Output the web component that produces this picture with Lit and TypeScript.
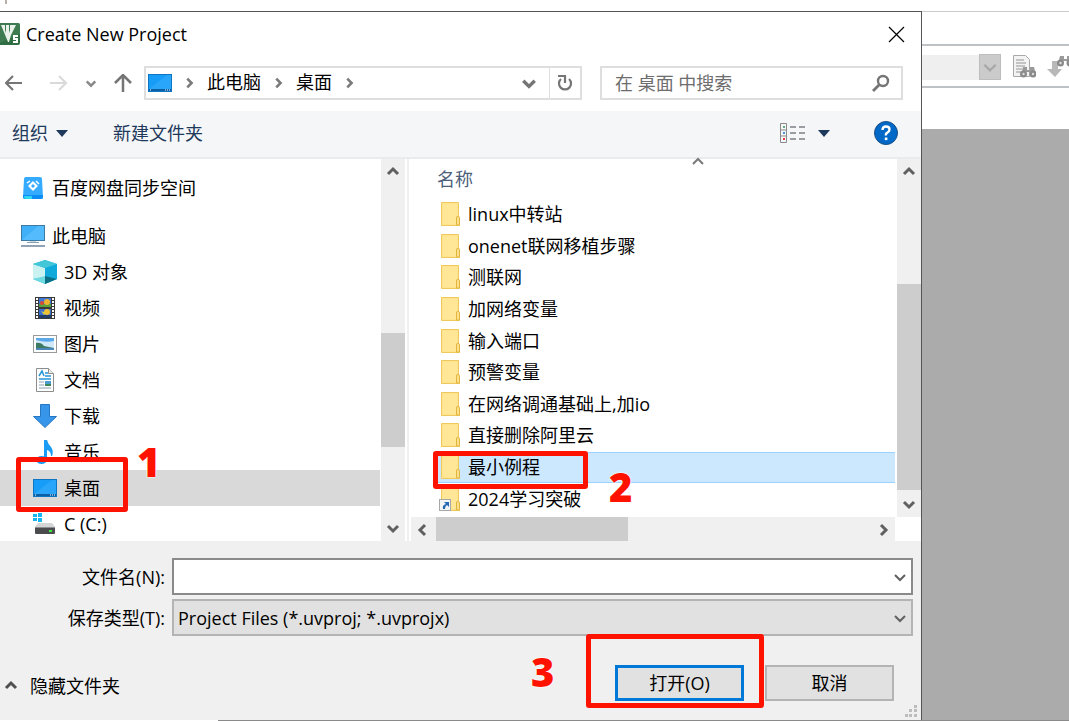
import { LitElement, html, css, svg, nothing, TemplateResult } from "lit";
import { customElement, property } from "lit/decorators.js";
import { classMap } from "lit/directives/class-map.js";
import { styleMap } from "lit/directives/style-map.js";

type Direction = "up" | "down" | "left" | "right";

const chevronPaths: Record<Direction, string> = {
  up: "M2 9 L7 4 L12 9",
  down: "M2 5 L7 10 L12 5",
  left: "M9 2 L4 7 L9 12",
  right: "M5 2 L10 7 L5 12",
};

const chevron = (dir: Direction, size = 14, stroke = 2, color = "#606060") => html`
  <svg width=${size} height=${size} viewBox="0 0 14 14" fill="none" stroke=${color} stroke-width=${stroke}>
    <path d=${chevronPaths[dir]} />
  </svg>`;

const glyphs: Record<string, TemplateResult> = {
  baidu: svg`
    <path d="M5 1h14q2 0 2 2l1 18q0 2-2 2H4q-2 0-2-2L3 3q0-2 2-2z" fill="#35abff"/>
    <path d="M2 19h20v2q0 2-2 2H4q-2 0-2-2z" fill="#0b8df5"/>
    <path d="M3 20h8v3H4q-1-1-1-3z" fill="#2fd6f2"/>
    <path d="M12 5l5 5-5 5-5-5z" fill="#fff"/>
    <path d="M12 8l2 2-2 2-2-2z" fill="#35abff"/>
    <path d="M6 7l3-2M15 5l3 3" stroke="#fff" stroke-width="1.500"/>`,
  pc: svg`
    <rect x="0.500" y="1.500" width="23" height="15" fill="#3fb0f7" stroke="#3c7ba6"/>
    <path d="M1 16L17 2h6v14z" fill="#62c3ff" opacity=".6"/>
    <path d="M9 17h6l1 2H8z" fill="#c8d2dc"/>
    <rect x="6" y="18" width="12" height="1" fill="#8aa0b4"/>
    <rect x="0" y="21" width="24" height="2" fill="#93a2b5"/>`,
  cube: svg`
    <path d="M0 4l12-4 12 4v15l-12 5L0 19z" fill="#19b5e2"/>
    <path d="M0 4l12 4v9L0 19z" fill="#c9f2f1"/>
    <path d="M12 8l12-4v15l-12-3z" fill="#0fa9dc"/>
    <path d="M0 4l12-4 12 4-12 4z" fill="#43c6d8"/>
    <path d="M0 19l12-3v8z" fill="#6fdbe0"/>
    <path d="M12 16l12 3-12 5z" fill="#0b6f86"/>`,
  video: svg`
    <rect x="2" y="1" width="20" height="22" fill="#3a3a3a"/>
    <path d="M4 2v20M20 2v20" stroke="#fff" stroke-width="2" stroke-dasharray="2 1"/>
    <rect x="6" y="2" width="12" height="9" fill="#3f78d8"/>
    <rect x="6" y="13" width="12" height="9" fill="#3a6fd0"/>
    <path d="M6 8h12v3H6z" fill="#58a13c"/><path d="M6 19h12v3H6z" fill="#223d66"/>
    <circle cx="14" cy="6" r="3" fill="#f2b32c"/><circle cx="9" cy="7" r="2" fill="#d94a35"/>
    <circle cx="14" cy="16" r="3" fill="#f0c02e"/><path d="M13 17l-5-2 3 4z" fill="#d9d04a"/>`,
  image: svg`
    <rect x="0.500" y="3.500" width="23" height="17" fill="#fff" stroke="#9a9a9a"/>
    <rect x="3" y="6" width="18" height="12" fill="#cfe8fa"/>
    <path d="M3 6h18v3q-9 2-18-1z" fill="#5aa8ea"/>
    <path d="M3 11q5-1 8 3l10 2v1H3z" fill="#3e7a62"/>
    <path d="M3 16h18v2H3z" fill="#4b86b8"/>`,
  doc: svg`
    <path d="M3.500 0.500h12l5 5v18h-17z" fill="#fff" stroke="#8d8d8d"/>
    <path d="M15.500 0.500v5h5" fill="#eee" stroke="#8d8d8d"/>
    <path d="M6 8l3-5 2 5M12 5h3M12 8h6M6 11h12" stroke="#2795d6" stroke-width="1.500" fill="none"/>
    <path d="M6 14h5M6 17h5M6 20h12" stroke="#8aa0b4" stroke-width="1.200"/>
    <rect x="12" y="13" width="6" height="5" fill="#4c9ccf"/><path d="M12 16h6v2h-6z" fill="#3c8658"/>`,
  download: svg`<path d="M7.500 0.500h9v12h7L12 23.500.500 12.500h7z" fill="#3796ea" stroke="#2577c2"/>`,
  music: svg`
    <path d="M11 0h3q1 4 4 7 3 4 1 9h-1q0-5-4-6v10h-3z" fill="#1a9cf5"/>
    <ellipse cx="8.500" cy="20" rx="5.500" ry="4" fill="#1a9cf5"/>`,
  desktop: svg`
    <rect x="0.500" y="3.500" width="23" height="17" fill="#179df8" stroke="#0f76c4"/>
    <path d="M1 18L19 4h4v14z" fill="#35acfb" opacity=".6"/>
    <rect x="1" y="18" width="22" height="2" fill="#0a5fa5"/>
    <path d="M2 19h1M17 19h1M19 19h1M21 19h1" stroke="#fff" stroke-width="1"/>`,
  disk: svg`
    <path d="M0 2h4v3H0zM5 1h4v4H5zM0 6h4v3H0zM5 6h4v4H5z" fill="#18b5f5"/>
    <path d="M5 11h14l3 4H2z" fill="#d3d5d7"/>
    <rect x="2" y="15" width="20" height="7" rx="1" fill="#4a4c4e"/>
    <rect x="2" y="15" width="20" height="1" fill="#8c8e90"/>
    <rect x="16" y="18" width="3" height="2" fill="#3df03d"/>`,
};

const icon = (name: string, size = 24) => html`
  <svg width=${size} height=${size} viewBox="0 0 24 24" aria-hidden="true">${glyphs[name]}</svg>`;

const folderIcon = (shortcut = false) => html`
  <svg width="24" height="24" viewBox="0 0 24 24" aria-hidden="true">
    <path d="M2.500 0.500h17v15l1 1v7h-18z" fill="#ffe48f" stroke="#efc95c" />
    <path d="M4 2h14v20H4z" fill="#ffe797" />
    <path d="M17.500 23v-8l2-1 1 2v7z" fill="#ffe08a" stroke="#e2b53e" />
    ${shortcut
      ? svg`<rect x="0.500" y="12.500" width="11" height="11" fill="#f4f4f4" stroke="#a8a8a8"/>
          <path d="M5 15h5v5l-2-2q-2 1-2 4H4q-1-4 3-5z" fill="#2467b4"/>`
      : nothing}
  </svg>`;

interface TreeNode { icon: string; label: string; level: number; selected?: boolean; spaced?: boolean }

const tree: TreeNode[] = [
  { icon: "baidu", label: "百度网盘同步空间", level: 0, spaced: true },
  { icon: "pc", label: "此电脑", level: 0 },
  { icon: "cube", label: "3D 对象", level: 1 },
  { icon: "video", label: "视频", level: 1 },
  { icon: "image", label: "图片", level: 1 },
  { icon: "doc", label: "文档", level: 1 },
  { icon: "download", label: "下载", level: 1 },
  { icon: "music", label: "音乐", level: 1 },
  { icon: "desktop", label: "桌面", level: 1, selected: true },
  { icon: "disk", label: "C (C:)", level: 1 },
];

const folders = [
  { name: "linux中转站" },
  { name: "onenet联网移植步骤" },
  { name: "测联网" },
  { name: "加网络变量" },
  { name: "输入端口" },
  { name: "预警变量" },
  { name: "在网络调通基础上,加io" },
  { name: "直接删除阿里云" },
  { name: "最小例程", selected: true },
  { name: "2024学习突破", shortcut: true },
];

@customElement("scroll-track")
export class ScrollTrack extends LitElement {
  @property({ type: Boolean, reflect: true }) horizontal = false;
  @property({ type: Number }) before = 0;
  @property({ type: Number }) thumb = 1;
  @property({ type: Number }) after = 0;

  static styles = css`
    :host { display: flex; flex-direction: column; width: 24px; background: #f0f0f0; flex: none; }
    :host([horizontal]) { flex-direction: row; width: auto; height: 24px; }
    button { flex: none; width: 24px; height: 26px; border: 0; padding: 0; background: none; display: grid; place-items: center; }
    .thumb { background: #cdcdcd; }
  `;

  render() {
    return html`
      <button aria-label="后退">${chevron(this.horizontal ? "left" : "up", 14, 3)}</button>
      <div style=${styleMap({ flex: `${this.before} 0 0` })}></div>
      <div class="thumb" style=${styleMap({ flex: `${this.thumb} 0 0` })}></div>
      <div style=${styleMap({ flex: `${this.after} 0 0` })}></div>
      <button aria-label="前进">${chevron(this.horizontal ? "right" : "down", 14, 3)}</button>
    `;
  }
}

@customElement("app-root")
export class AppRoot extends LitElement {
  static styles = css`
    :host { display: block; }
    * { box-sizing: border-box; }
    svg { display: block; flex: none; }
    button, input, select { font: inherit; color: inherit; margin: 0; padding: 0; border: 0; border-radius: 0; background: none; outline: none; }
    .screen {
      min-height: 100vh; display: flex; flex-direction: column; background: #fff; color: #000;
      font: 18px/24px "Open Sans", "Noto Sans CJK SC", sans-serif; overflow: hidden;
    }
    .strip { height: 11px; padding-left: 5px; flex: none; }
    .tick { width: 2px; height: 4px; background: #b9b0aa; }
    .body { flex: 1; display: flex; align-items: stretch; }
    .foot { height: 1px; margin-left: 218px; background: #8a8a8a; flex: none; }

    .dialog { flex: 1; min-width: 0; display: flex; flex-direction: column; border-top: 1px solid #555; border-right: 1px solid #555; background: #fff; }
    .title { display: flex; align-items: center; height: 44px; padding-right: 16px; gap: 6px; }
    .title h1 { flex: 1; margin: 0; font-size: 18px; font-weight: 400; }
    .nav { display: flex; align-items: center; height: 55px; padding: 0 18px 1px 5px; }
    .arrows { display: flex; align-items: center; width: 139px; gap: 25px; }
    .history { display: flex; align-items: center; gap: 17px; }
    .address { flex: 438 1 438px; height: 34px; display: flex; align-items: center; border: 2px solid #dedede; padding-left: 2px; min-width: 0; }
    .crumb { margin: 0 0 2px 12px; }
    .address .sep { margin-left: 11px; }
    .address .drop { margin-left: auto; width: 28px; }
    .address .refresh { width: 31px; height: 30px; border-left: 1px solid #dedede; display: grid; place-items: center; }
    .search { flex: 303 1 303px; height: 34px; margin-left: 18px; display: flex; align-items: center; border: 2px solid #dedede; padding: 0 11px 0 13px; min-width: 0; }
    .search input { flex: 1; min-width: 0; }
    .search input::placeholder { color: #6d6d6d; opacity: 1; }

    .tools { display: flex; align-items: center; height: 48px; padding: 0 23px 2px 12px; background: #f4f6f8; border-bottom: 2px solid #e9ebee; color: #1e395b; }
    .tools button { display: flex; align-items: center; }
    .organize { gap: 8px; width: 101px; }
    .view { margin-left: auto; gap: 13px; }
    .help { margin-left: 44px; width: 24px; height: 24px; border-radius: 50%; }

    .panes { flex: 1; display: flex; min-height: 0; }
    .tree { flex: 381 1 381px; margin: 0; padding: 11px 1px 0 0; list-style: none; height: 382px; overflow: hidden; }
    .node { display: flex; align-items: center; height: 36px; padding-left: 21px; gap: 7px; position: relative; }
    .node.child { padding-left: 33px; }
    .node.spaced { margin-bottom: 12px; }
    .node.selected { background: #d9d9d9; z-index: 1; }
    .splitter { width: 6px; flex: none; background: linear-gradient(90deg, #fff 2px, #f0f0f0 2px, #f0f0f0 4px, #fff 4px); }
    .files { flex: 510 1 510px; min-width: 0; display: flex; }
    .filecol { flex: 1; min-width: 0; display: flex; flex-direction: column; }
    .colhead { height: 40px; padding: 8px 0 0 26px; color: #4c607a; display: grid; grid-template-columns: 1fr 14px 190px; }
    .colhead svg { margin-top: -12px; }
    .list { flex: 1; margin: 0; padding: 0 0 2px 22px; list-style: none; display: grid; grid-auto-rows: 1fr; }
    .file { display: flex; align-items: center; padding: 0 0 1px 6px; gap: 5px; position: relative; min-height: 0; }
    .file.selected { background: #cce8ff; box-shadow: inset 0 1px #99d1ff, inset 0 -1px #99d1ff; z-index: 1; }
    .vcol { display: flex; flex-direction: column; padding-left: 2px; }
    .vcol scroll-track { flex: 1; }
    .corner { height: 24px; }

    .form { background: #f0f0f0; padding: 17px 8px 0 0; display: grid; grid-template-columns: 165px 1fr; column-gap: 7px; row-gap: 4px; align-items: center; }
    .form label { text-align: right; }
    .combo { position: relative; height: 37px; display: flex; }
    .combo input, .combo select { flex: 1; min-width: 0; border: 2px solid #8a8a8a; background: #fff; padding: 0 34px 0 4px; appearance: none; }
    .combo select { background: #e1e1e1; border-color: #b4b4b4; }
    .combo svg { position: absolute; right: 6px; top: 12px; pointer-events: none; }

    .actions { background: #f0f0f0; height: 84px; display: flex; align-items: flex-start; padding: 29px 27px 0 4px; position: relative; }
    .hide { display: flex; align-items: center; gap: 12px; }
    .actions .hide { margin: 9px auto 0 0; }
    .btn { width: 129px; height: 36px; background: #e1e1e1; border: 2px solid #b4b4b4; display: block; }
    .btn.primary { border: 3px solid #0078d7; }
    .slot { position: relative; margin-right: 21px; }
    .grip { position: absolute; right: 3px; bottom: 2px; }

    .mark { position: absolute; border: 5px solid #ff1200; border-radius: 3px; pointer-events: none; }
    .num { position: absolute; color: #ff1200; font: 800 40px/40px "Open Sans", sans-serif; text-shadow: 0 0 2px #fff, 0 0 2px #fff; pointer-events: none; }
    .mark1 { left: 16px; top: -13px; width: 112px; height: 55px; }
    .num1 { left: 137px; top: -28px; }
    .mark2 { left: 0; top: -1px; width: 155px; height: 38px; }
    .num2 { left: 176px; top: 15px; }
    .mark3 { left: -29px; top: -31px; width: 178px; height: 74px; z-index: 1; }
    .num3 { left: -84px; top: -13px; }

    .ide { width: 147px; flex: none; border-top: 1px solid #ccc; display: flex; flex-direction: column; }
    .ide .menu { height: 32px; }
    .ide .bar { height: 44px; border-top: 2px solid #bec2c5; border-bottom: 2px solid #bec2c5; display: flex; align-items: center; padding-top: 2px; overflow: hidden; }
    .ide .field { width: 57px; height: 25px; flex: none; background: #efefef; }
    .ide .pick { width: 22px; height: 26px; flex: none; background: #cbcbcb; border: 1px solid #bdbdbd; display: grid; place-items: center; }
    .ide .find { margin-left: 11px; }
    .ide .next { margin-left: 11px; }
    .ide .tabs { height: 41px; }
    .ide .canvas { flex: 1; background: #ababab; }
  `;

  private renderTitle() {
    return html`
      <header class="title">
        <svg width="20" height="22" viewBox="0 0 20 22" aria-hidden="true">
          <path d="M0 0h18q2 0 2 2v18q0 2-2 2H0z" fill="#2f6d43" />
          <path d="M0 0h18q2 0 2 2v9L0 20z" fill="#4d8a5d" opacity=".5" />
          <path d="M1 2h4v5l1 3V2h3v8l1-3V2h6l-5 10-2 7h-1z" fill="#e9f2eb" />
          <path d="M18 13h-4v3h3v3h-4" fill="none" stroke="#fff" stroke-width="2" />
        </svg>
        <h1>Create New Project</h1>
        <button aria-label="关闭">
          <svg width="17" height="17" viewBox="0 0 17 17" stroke="#000" stroke-width="1.200"><path d="M1 1l15 15M16 1L1 16" /></svg>
        </button>
      </header>`;
  }

  private renderNav() {
    return html`
      <nav class="nav">
        <div class="arrows">
          <button aria-label="返回">
            <svg width="18" height="18" viewBox="0 0 18 18" fill="none" stroke="#757575" stroke-width="2.200"><path d="M17 9H1M8 2L1 9l7 7" /></svg>
          </button>
          <div class="history">
            <button aria-label="前进">
              <svg width="20" height="18" viewBox="0 0 20 18" fill="none" stroke="#dadada" stroke-width="2.200"><path d="M2 9h16M11 2l7 7-7 7" /></svg>
            </button>
            <button aria-label="最近">${chevron("down", 12, 3, "#8a8a8a")}</button>
            <button aria-label="上移">
              <svg width="18" height="18" viewBox="0 0 18 18" fill="none" stroke="#757575" stroke-width="2.500"><path d="M9 18V2M1 9l8-8 8 8" /></svg>
            </button>
          </div>
        </div>
        <div class="address">
          ${icon("desktop")}
          <span class="sep">${chevron("right", 12, 3, "#7a7a7a")}</span>
          <span class="crumb">此电脑</span>
          <span class="sep">${chevron("right", 12, 3, "#7a7a7a")}</span>
          <span class="crumb">桌面</span>
          <span class="sep">${chevron("right", 12, 3, "#7a7a7a")}</span>
          <button class="drop" aria-label="展开">${chevron("down", 16, 3, "#757575")}</button>
          <button class="refresh" aria-label="刷新">
            <svg width="16" height="18" viewBox="0 0 16 18" fill="none" stroke="#757575" stroke-width="2.200">
              <path d="M12 5a6 6 0 1 1-8 0" /><path d="M1 2h7v7" />
            </svg>
          </button>
        </div>
        <div class="search">
          <input type="text" aria-label="搜索" placeholder="在 桌面 中搜索" />
          <svg width="18" height="18" viewBox="0 0 18 18" fill="none" stroke="#757575"><circle cx="11" cy="7" r="5" stroke-width="2.400" /><path d="M7.500 10.500L1 17" stroke-width="2.800" /></svg>
        </div>
      </nav>`;
  }

  private renderTools() {
    const caret = html`<svg width="12" height="7" viewBox="0 0 12 7"><path d="M0 0h12L6 7z" fill="#1e395b" /></svg>`;
    return html`
      <div class="tools">
        <button class="organize">组织 ${caret}</button>
        <button>新建文件夹</button>
        <button class="view" aria-label="更改视图">
          <svg width="25" height="20" viewBox="0 0 25 20" fill="none" stroke="#8b8b8b">
            <path d="M.500 .500h6v19h-6zM.500 7h6M.500 13h6" />
            <path d="M10 4h6M19 4h6M10 10h6M19 10h6M10 16h6M19 16h6" stroke="#7c8084" stroke-width="1.400" />
            <path d="M3 4h2" stroke="#6a8" stroke-width="2" /><path d="M3 10h2" stroke="#4a90e2" stroke-width="2" /><path d="M3 16h2" stroke="#e23c3c" stroke-width="2" />
          </svg>
          ${caret}
        </button>
        <button class="help" aria-label="帮助">
          <svg width="24" height="24" viewBox="0 0 24 24">
            <circle cx="12" cy="12" r="11.500" fill="#0068c6" stroke="#1b4f85" />
            <path d="M8.500 9q0-3.500 3.500-3.500t3.500 3q0 2-2 3T12 14.500" fill="none" stroke="#fff" stroke-width="2.400" />
            <rect x="10.800" y="16.500" width="2.600" height="2.600" fill="#fff" />
          </svg>
        </button>
      </div>`;
  }

  private renderPanes() {
    return html`
      <div class="panes">
        <ul class="tree">
          ${tree.map((n) => html`
            <li class=${classMap({ node: true, child: n.level > 0, selected: !!n.selected, spaced: !!n.spaced })}>
              ${icon(n.icon)}<span>${n.label}</span>
              ${n.selected ? html`<i class="mark mark1"></i><b class="num num1">1</b>` : nothing}
            </li>`)}
        </ul>
        <scroll-track .before=${148} .thumb=${114} .after=${68}></scroll-track>
        <div class="splitter"></div>
        <div class="files">
          <div class="filecol">
            <div class="colhead"><span>名称</span>${chevron("up", 14, 2, "#7a7a7a")}</div>
            <ul class="list">
              ${folders.map((f) => html`
                <li class=${classMap({ file: true, selected: !!f.selected })}>
                  ${folderIcon(f.shortcut)}<span>${f.name}</span>
                  ${f.selected ? html`<i class="mark mark2"></i><b class="num num2">2</b>` : nothing}
                </li>`)}
            </ul>
            <scroll-track horizontal .before=${1} .thumb=${192} .after=${243}></scroll-track>
          </div>
          <div class="vcol">
            <scroll-track .before=${99} .thumb=${206} .after=${1}></scroll-track>
            <div class="corner"></div>
          </div>
        </div>
      </div>`;
  }

  private renderFooter() {
    return html`
      <div class="form">
        <label for="file-name">文件名(N):</label>
        <div class="combo"><input id="file-name" type="text" />${chevron("down", 14, 2)}</div>
        <label for="file-type">保存类型(T):</label>
        <div class="combo">
          <select id="file-type"><option>Project Files (*.uvproj; *.uvprojx)</option></select>
          ${chevron("down", 14, 2)}
        </div>
      </div>
      <footer class="actions">
        <button class="hide">${chevron("up", 14, 3, "#505050")}<span>隐藏文件夹</span></button>
        <div class="slot">
          <button class="btn primary">打开(O)</button>
          <i class="mark mark3"></i><b class="num num3">3</b>
        </div>
        <button class="btn">取消</button>
        <svg class="grip" width="14" height="14" viewBox="0 0 14 14" fill="#bdbdbd">
          <path d="M10 1h3v3h-3zM10 5h3v3h-3zM5 5h3v3H5zM10 10h3v3h-3zM5 10h3v3H5zM1 10h3v3H1z" />
        </svg>
      </footer>`;
  }

  private renderIde() {
    const binoculars = svg`
      <path d="M1 12l2-8h4v3h3V4h4l2 8h-5v-3H6v3z" fill="#9a9a9a"/>
      <circle cx="3.500" cy="11" r="3.500" fill="#8a8a8a"/><circle cx="13" cy="11" r="3.500" fill="#8a8a8a"/>
      <circle cx="3.500" cy="11" r="1.200" fill="#ddd"/><circle cx="13" cy="11" r="1.200" fill="#ddd"/>`;
    return html`
      <aside class="ide">
        <div class="menu"></div>
        <div class="bar">
          <input class="field" type="text" aria-label="查找" />
          <button class="pick" aria-label="展开">${chevron("down", 16, 2, "#a8a8a8")}</button>
          <svg class="find" width="24" height="24" viewBox="0 0 24 24">
            <path d="M1.500 .500h12l4 4v17h-16z" fill="#f3f3f3" stroke="#a8a8a8" />
            <path d="M4 5h8M4 8h10M4 11h9M4 14h6M4 17h5" stroke="#b4b4b4" stroke-width="1.500" />
            <g transform="translate(8 8)">${binoculars}</g>
          </svg>
          <svg class="next" width="28" height="24" viewBox="0 0 28 24">
            <path d="M5 6h6v8h4l-7 8-8-8h5z" fill="#b8b8b8" />
            <g transform="translate(10 -3)">${binoculars}</g>
          </svg>
        </div>
        <div class="tabs"></div>
        <div class="canvas"></div>
      </aside>`;
  }

  render() {
    return html`
      <div class="screen">
        <div class="strip"><div class="tick"></div></div>
        <div class="body">
          <main class="dialog">
            ${this.renderTitle()} ${this.renderNav()} ${this.renderTools()} ${this.renderPanes()} ${this.renderFooter()}
          </main>
          ${this.renderIde()}
        </div>
        <div class="foot"></div>
      </div>`;
  }
}
